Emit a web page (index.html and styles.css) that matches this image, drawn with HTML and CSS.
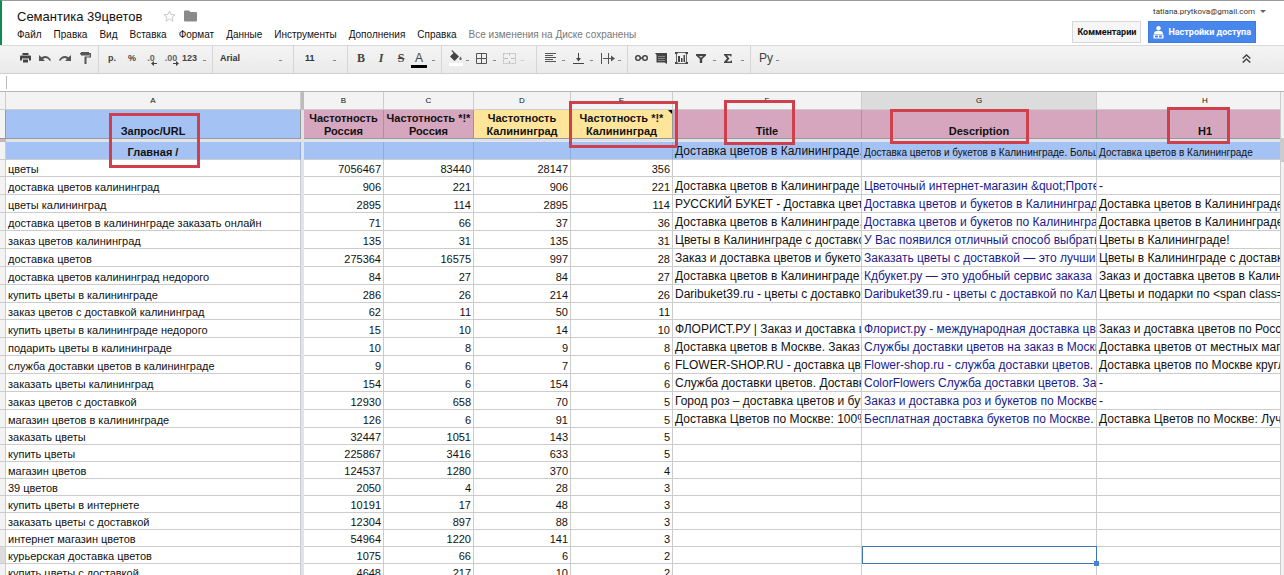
FILE: index.html
```html
<!DOCTYPE html>
<html lang="ru">
<head>
<meta charset="utf-8">
<title>Семантика 39цветов</title>
<link rel="stylesheet" href="styles.css">
</head>
<body>
<header class="top">
  <div class="doc">
    <div class="title-row">
      <h1 class="title">Семантика 39цветов</h1>
      <button class="icon-btn" aria-label="Пометить"><svg width="13" height="12" viewBox="0 0 13 12" fill="none" stroke="#c8c8c8"><path d="M6.5 1 8 4.5l4 .3-3 2.5 1 3.9-3.500-2.200L3 11.200l1-3.900-3-2.500 4-.3z"/></svg></button>
      <button class="icon-btn" aria-label="Переместить"><svg width="13" height="12" viewBox="0 0 13 12" fill="#8a8a8a"><path d="M0 1.500Q0 .5 1 .5H5L6.500 2H12Q13 2 13 3V10.500Q13 11.500 12 11.500H1Q0 11.500 0 10.500z"/></svg></button>
    </div>
    <nav class="menu">
      <button>Файл</button><button>Правка</button><button>Вид</button><button>Вставка</button><button>Формат</button><button>Данные</button><button>Инструменты</button><button>Дополнения</button><button>Справка</button>
      <span class="saved">Все изменения на Диске сохранены</span>
    </nav>
  </div>
  <div class="account">
    <button class="mail">tatiana.prytkova@gmail.com<span class="tri"></span></button>
    <div class="actions">
      <button class="comments">Комментарии</button>
      <button class="share"><svg width="11" height="13" viewBox="0 0 11 13" fill="#fff"><circle cx="5.500" cy="2.200" r="2.200"/><path d="M1 8Q1 5 4 5H7Q10 5 10 8z"/><path d="M.5 8.500H10.500V12.500H.5z"/><path fill="#4787ed" d="M2 9.500H5V11.500H2zM6 9.500H9V11.500H6z"/></svg>Настройки доступа</button>
    </div>
  </div>
</header>
<div class="toolbar" role="toolbar">
  <div class="group">
    <button aria-label="Печать"><svg width="11" height="10" viewBox="0 0 11 10" fill="#444"><path d="M2.500 0H8.500V2H2.500zM1 2.500H10Q11 2.500 11 3.500V7.500H9V5.500H2V7.500H0V3.500Q0 2.500 1 2.500zM3 6.500H8V9.500H3z"/></svg></button>
    <button aria-label="Отменить"><svg width="12" height="8" viewBox="0 0 12 8"><path d="M0 1V7H6L4 5Q7.500 2.500 11 7L12 6Q8-.5 2.500 3.300z" fill="#555"/></svg></button>
    <button aria-label="Повторить"><svg width="12" height="8" viewBox="0 0 12 8"><path d="M12 1V7H6L8 5Q4.500 2.500 1 7L0 6Q4-.5 9.500 3.300z" fill="#555"/></svg></button>
    <button aria-label="Копировать форматирование"><svg width="11" height="12" viewBox="0 0 11 12"><path d="M1 0H9V1H11V5.500H6.500V12H4.500V4.500H9.500V2.500H9V3.500H1V2.500H0V1H1z" fill="#555"/></svg></button>
  </div>
  <div class="group">
    <button>р.</button><button>%</button>
    <button class="dec">.0<svg width="6" height="5" viewBox="0 0 6 5"><path d="M0 2.500 3 0V2H6V3H3V5z" fill="#444"/></svg></button>
    <button class="dec">.00<svg width="6" height="5" viewBox="0 0 6 5"><path d="M6 2.500 3 0V2H0V3H3V5z" fill="#444"/></svg></button>
    <button class="drop num-format">123</button>
  </div>
  <div class="group"><label class="pick font"><select aria-label="Шрифт"><option>Arial</option></select></label></div>
  <div class="group"><label class="pick size"><select aria-label="Размер шрифта"><option>11</option></select></label></div>
  <div class="group">
    <button class="serif">B</button><button class="serif italic">I</button><button class="serif strike">S</button><button class="drop tcolor"><span>A</span></button>
  </div>
  <div class="group">
    <button class="drop" aria-label="Цвет заливки"><svg width="14" height="16" viewBox="0 0 14 16"><path d="M3 0 10 6.500 5.500 11 1 6.500 4.500 3 2.500 1z" fill="#444"/><path d="M11.500 6.500Q14 10 11.500 10T11.500 6.500" fill="#666"/><path d="M0 13H14V16H0z" fill="#fff"/></svg></button>
    <button class="drop" aria-label="Границы"><svg width="11" height="11" viewBox="0 0 11 11" fill="none" stroke="#555"><path d="M.5.5H10.500V10.500H.5zM5.500.5V10.500M.5 5.500H10.500"/></svg></button>
    <button class="drop faint" aria-label="Объединить ячейки"><svg width="13" height="11" viewBox="0 0 13 11" fill="none" stroke="#bbb"><path stroke-dasharray="2 1" d="M.5.5H12.500V10.500H.5zM6.500.5V3M6.500 8V10.500"/><path d="M1 5.500H5M8 5.500H12"/></svg></button>
  </div>
  <div class="group loose">
    <button class="drop" aria-label="Выравнивание"><svg width="11" height="10" viewBox="0 0 11 10" stroke="#555"><path d="M0 .5H11M0 2.500H8M0 4.500H11M0 6.500H8M0 8.500H11"/></svg></button>
    <button class="drop" aria-label="По вертикали"><svg width="11" height="11" viewBox="0 0 11 11" fill="#444"><path d="M5 0H6V5H8L5.500 8.500 3 5H5zM0 10H11V11H0z"/></svg></button>
    <button class="drop" aria-label="Перенос текста"><svg width="14" height="11" viewBox="0 0 14 11" fill="#555"><path d="M0 0H1V11H0zM2 5H10V2.500L14 5.500 10 8.500V6H2zM7 0H8V11H7z"/></svg></button>
  </div>
  <div class="group loose">
    <button aria-label="Ссылка"><svg width="13" height="6" viewBox="0 0 13 6" fill="none" stroke="#444" stroke-width="1.500"><rect x=".8" y=".8" width="4.400" height="4.400" rx="2"/><rect x="7.800" y=".8" width="4.400" height="4.400" rx="2"/><path d="M5 3H8"/></svg></button>
    <button aria-label="Комментарий"><svg width="12" height="11" viewBox="0 0 12 11"><path d="M0 0H12V11L9.500 9.500H1.500V2z" fill="#444"/><path d="M3 3.500H10M3 5.500H10M3 7.500H10" stroke="#888"/></svg></button>
    <button aria-label="Диаграмма"><svg width="13" height="12" viewBox="0 0 13 12"><path d="M1.500.5H11.500V11.500H1.500z" fill="none" stroke="#666"/><path d="M0 0H2.500V2H0zM10.500 0H13V2H10.500zM0 10H2.500V12H0zM10.500 10H13V12H10.500zM3 4H5V10H3zM6 6H7.500V10H6zM8.500 3H10V10H8.500z" fill="#444"/></svg></button>
    <button class="drop" aria-label="Фильтр"><svg width="10" height="9" viewBox="0 0 10 9"><path d="M0 0H10V1.500L6.200 5V9H3.800V5L0 1.500z" fill="#444"/><path d="M3 2H7L5 4z" fill="#ccc"/></svg></button>
    <button class="drop" aria-label="Функции"><svg width="8" height="9" viewBox="0 0 8 9"><path d="M0 0H7.500V2.500H6.500L6 1.500H3L5.500 4.500 3 7.500H6.500L7 6.500H8V9H0V8L3 4.500 0 1z" fill="#444"/></svg></button>
  </div>
  <div class="group loose last"><button class="drop input-tools">Ру</button></div>
  <button class="collapse" aria-label="Скрыть меню"><svg width="9" height="9" viewBox="0 0 9 9" fill="none" stroke="#444" stroke-width="1.500"><path d="M.7 4.500 4.500 1 8.300 4.500M.7 8.500 4.500 5 8.300 8.500"/></svg></button>
</div>
<div class="formula"><input aria-label="Формула" type="text"></div>
<main class="sheet">
<div class="viewport">
<table class="grid">
<colgroup><col class="c-n"><col class="c-a"><col class="c-f"><col class="c-b"><col class="c-c"><col class="c-d"><col class="c-e"><col class="c-t"><col class="c-g"><col class="c-h"></colgroup>
<thead>
<tr class="letters"><th></th><th>A</th><th class="bar"></th><th>B</th><th>C</th><th>D</th><th>E</th><th>F</th><th class="on">G</th><th>H</th></tr>
<tr class="names"><th class="num"></th><th class="blue">Запрос/URL<i class="mark m-url"></i></th><td class="freeze" rowspan="2"></td><th class="pink">Частотность<br>Россия</th><th class="pink">Частотность *!*<br>Россия</th><th class="yellow">Частотность<br>Калининград</th><th class="yellow">Частотность *!*<br>Калининград<i class="note"></i><i class="mark m-freq"></i></th><th class="pink">Title<i class="mark m-title"></i></th><th class="pink">Description<i class="mark m-desc"></i></th><th class="pink">H1<i class="mark m-h1"></i></th></tr>
<tr class="split"><td class="grip"></td><td></td><td colspan="7"></td></tr>
</thead>
<tbody>
<tr class="main tall"><td class="num"></td><th>Главная /</th><td class="freeze" rowspan="25"></td><td></td><td></td><td></td><td></td><td class="t">Доставка цветов в Калининграде.</td><td class="s">Доставка цветов и букетов в Калининграде. Большой</td><td class="s">Доставка цветов в Калининграде</td></tr>
<tr><td class="num"></td><td>цветы</td><td>7056467</td><td>83440</td><td>28147</td><td>356</td><td></td><td></td><td></td></tr>
<tr class="tall"><td class="num"></td><td>доставка цветов калининград</td><td>906</td><td>221</td><td>906</td><td>221</td><td class="t">Доставка цветов в Калининграде и</td><td class="t g">Цветочный интернет-магазин &amp;quot;Протея</td><td class="t">-</td></tr>
<tr class="tall"><td class="num"></td><td>цветы калининград</td><td>2895</td><td>114</td><td>2895</td><td>114</td><td class="t">РУССКИЙ БУКЕТ - Доставка цветов</td><td class="t g">Доставка цветов и букетов в Калининграде</td><td class="t">Доставка цветов в Калининграде</td></tr>
<tr class="tall"><td class="num"></td><td>доставка цветов в калининграде заказать онлайн</td><td>71</td><td>66</td><td>37</td><td>36</td><td class="t">Доставка цветов в Калининграде,</td><td class="t g">Доставка цветов и букетов по Калининграду</td><td class="t">Доставка цветов в Калининграде</td></tr>
<tr class="tall"><td class="num"></td><td>заказ цветов калининград</td><td>135</td><td>31</td><td>135</td><td>31</td><td class="t">Цветы в Калининграде с доставкой</td><td class="t g">У Вас появился отличный способ выбрать</td><td class="t">Цветы в Калининграде!</td></tr>
<tr class="tall"><td class="num"></td><td>доставка цветов</td><td>275364</td><td>16575</td><td>997</td><td>28</td><td class="t">Заказ и доставка цветов и букетов</td><td class="t g">Заказать цветы с доставкой — это лучший</td><td class="t">Цветы в Калининграде с доставкой</td></tr>
<tr class="tall"><td class="num"></td><td>доставка цветов калининград недорого</td><td>84</td><td>27</td><td>84</td><td>27</td><td class="t">Доставка цветов в Калининграде -</td><td class="t g">Кдбукет.ру — это удобный сервис заказа и</td><td class="t">Заказ и доставка цветов в Калининграде</td></tr>
<tr class="tall"><td class="num"></td><td>купить цветы в калининграде</td><td>286</td><td>26</td><td>214</td><td>26</td><td class="t">Daribuket39.ru - цветы с доставкой</td><td class="t g">Daribuket39.ru - цветы с доставкой по Калининграду</td><td class="t">Цветы и подарки по &lt;span class="</td></tr>
<tr><td class="num"></td><td>заказ цветов с доставкой калининград</td><td>62</td><td>11</td><td>50</td><td>11</td><td></td><td></td><td></td></tr>
<tr class="tall"><td class="num"></td><td>купить цветы в калининграде недорого</td><td>15</td><td>10</td><td>14</td><td>10</td><td class="t">ФЛОРИСТ.РУ | Заказ и доставка цветов</td><td class="t g">Флорист.ру - международная доставка цветов</td><td class="t">Заказ и доставка цветов по России</td></tr>
<tr class="tall"><td class="num"></td><td>подарить цветы в калининграде</td><td>10</td><td>8</td><td>9</td><td>8</td><td class="t">Доставка цветов в Москве. Заказ 6</td><td class="t g">Службы доставки цветов на заказ в Москве</td><td class="t">Доставка цветов от местных магазинов</td></tr>
<tr class="tall"><td class="num"></td><td>служба доставки цветов в калининграде</td><td>9</td><td>6</td><td>7</td><td>6</td><td class="t">FLOWER-SHOP.RU - доставка цветов</td><td class="t g">Flower-shop.ru - служба доставки цветов. С</td><td class="t">Доставка цветов по Москве круглосуточно</td></tr>
<tr class="tall"><td class="num"></td><td>заказать цветы калининград</td><td>154</td><td>6</td><td>154</td><td>6</td><td class="t">Служба доставки цветов. Доставка</td><td class="t g">ColorFlowers Служба доставки цветов. Заказ</td><td class="t">-</td></tr>
<tr class="tall"><td class="num"></td><td>заказ цветов с доставкой</td><td>12930</td><td>658</td><td>70</td><td>5</td><td class="t">Город роз – доставка цветов и букетов</td><td class="t g">Заказ и доставка роз и букетов по Москве</td><td class="t">-</td></tr>
<tr class="tall"><td class="num"></td><td>магазин цветов в калининграде</td><td>126</td><td>6</td><td>91</td><td>5</td><td class="t">Доставка Цветов по Москве: 100%</td><td class="t g">Бесплатная доставка букетов по Москве. Т</td><td class="t">Доставка Цветов по Москве: Лучшие</td></tr>
<tr><td class="num"></td><td>заказать цветы</td><td>32447</td><td>1051</td><td>143</td><td>5</td><td></td><td></td><td></td></tr>
<tr><td class="num"></td><td>купить цветы</td><td>225867</td><td>3416</td><td>633</td><td>5</td><td></td><td></td><td></td></tr>
<tr><td class="num"></td><td>магазин цветов</td><td>124537</td><td>1280</td><td>370</td><td>4</td><td></td><td></td><td></td></tr>
<tr><td class="num"></td><td>39 цветов</td><td>2050</td><td>4</td><td>28</td><td>3</td><td></td><td></td><td></td></tr>
<tr><td class="num"></td><td>купить цветы в интернете</td><td>10191</td><td>17</td><td>48</td><td>3</td><td></td><td></td><td></td></tr>
<tr><td class="num"></td><td>заказать цветы с доставкой</td><td>12304</td><td>897</td><td>88</td><td>3</td><td></td><td></td><td></td></tr>
<tr><td class="num"></td><td>интернет магазин цветов</td><td>54964</td><td>1220</td><td>141</td><td>3</td><td></td><td></td><td></td></tr>
<tr><td class="num on"></td><td>курьерская доставка цветов</td><td>1075</td><td>66</td><td>6</td><td>2</td><td></td><td class="cursor"><i class="ring"></i></td><td></td></tr>
<tr><td class="num"></td><td>купить цветы с доставкой</td><td>4648</td><td>217</td><td>10</td><td>2</td><td></td><td></td><td></td></tr>
</tbody>
</table>
</div>
<div class="scroll"><div class="thumb"></div></div>
</main>
</body>
</html>
```
FILE: styles.css
```css
* { box-sizing: border-box; }
body {
  margin: 0;
  height: 100vh;
  overflow: hidden;
  display: flex;
  flex-direction: column;
  background: #fff;
  color: #111;
  font-family: "Liberation Sans", Arial, sans-serif;
  font-size: 12px;
}
button, select, input {
  margin: 0;
  padding: 0;
  border: 0;
  background: none;
  color: inherit;
  font: inherit;
}
svg { display: block; flex: none; }

.top {
  display: flex;
  justify-content: space-between;
  height: 45px;
  flex: none;
  border-top: 1px solid #999;
  border-left: 2px solid #0f8a54;
}
.doc { padding: 6px 0 0 15px; }
.title-row { display: flex; align-items: center; height: 18px; }
.title { margin: 0 21px 0 0; font-size: 13px; font-weight: 400; }
.icon-btn { margin-right: 8px; }
.menu { display: flex; gap: 12px; font-size: 10px; line-height: 14px; padding-top: 3px; white-space: nowrap; }
.saved { color: #777; }
.account { display: flex; flex-direction: column; align-items: flex-end; padding: 5px 18px 0 0; }
.mail { display: flex; align-items: center; gap: 5px; font-family: Roboto, sans-serif; font-size: 8px; line-height: 11px; color: #333; }
.tri { border: 3px solid transparent; border-top-color: #666; border-bottom: 0; }
.actions { display: flex; gap: 7px; padding: 4px 10px 0 0; }
.comments, .share {
  height: 22px;
  padding: 0 4px;
  border: 1px solid #d6d6d6;
  background: #f6f6f6;
  font-family: Roboto, sans-serif;
  font-size: 9px;
  font-weight: 700;
}
.share { display: flex; align-items: center; gap: 4px; color: #fff; background: #4787ed; border-color: #3d7be0; }

.toolbar {
  display: flex;
  flex: none;
  height: 29px;
  padding-left: 12px;
  background: linear-gradient(#f4f4f4, #eaeaea);
  border-top: 1px solid #d9d9d9;
  border-bottom: 1px solid #cfcfcf;
  color: #444;
  font-size: 9px;
  font-weight: 700;
}
.group { display: flex; align-items: center; padding: 0 3px 3px; border-right: 1px solid #d5d5d5; }
.group.last { border: 0; }
.group button { width: 20px; height: 24px; display: flex; align-items: center; justify-content: center; }
.group .drop { width: 27px; justify-content: space-between; padding: 0 3px 0 4px; }
.group.loose .drop { width: 28px; padding-left: 5px; }
.group .num-format { padding: 0 3px 0 0; }
.group .faint { width: 34px; padding-right: 9px; }
.drop::after, .pick::after { content: ""; width: 3px; height: 1px; margin-top: 4px; background: #888; }
.group .faint::after { background: #ccc; }
.group .dec { color: #666; }
.dec svg { margin: 10px 0 0 -4px; }
.pick { display: flex; align-items: center; padding-right: 8px; color: #333; }
.pick select { appearance: none; flex: 1; min-width: 0; }
.font { width: 74px; padding-left: 4px; }
.size { width: 47px; padding-left: 8px; }
.serif { font-family: "Liberation Serif", serif; font-size: 12px; }
.italic { font-style: italic; }
.strike { text-decoration: line-through; }
.tcolor span { font-size: 12px; line-height: 13px; font-weight: 400; padding: 0 4px; margin: 4px 0 0 -4px; border-bottom: 3px solid #000; }
.group .input-tools { font-size: 12px; font-weight: 400; width: 32px; }
.collapse { margin-left: auto; padding: 0 33px 3px 0; }

.formula { flex: none; height: 17px; padding-left: 6px; }
.formula input { width: 100%; height: 13px; border-left: 1px solid #bbb; padding-left: 4px; display: block; margin-top: 2px; }

.sheet { flex: 1; min-height: 0; overflow: hidden; display: flex; align-items: stretch; border-top: 1px solid #b5b5b5; }
.viewport { flex: 1; min-width: 0; overflow: hidden; }
.grid { width: 1314px; min-width: 100%; table-layout: fixed; border-collapse: separate; border-spacing: 0; }
.c-n { width: 6px; }
.c-a { width: 295px; }
.c-f { width: 3px; }
.c-b { width: 80px; }
.c-c { width: 90px; }
.c-d { width: 97px; }
.c-e { width: 102px; }
.c-t { width: 189px; }
.c-g { width: 235px; }
.c-h { width: 217px; }
.grid th, .grid td {
  height: 17px;
  padding: 0 2px;
  border: 0 solid #ccc;
  border-width: 0 1px 1px 0;
  font-size: 11px;
  line-height: 14px;
  vertical-align: bottom;
  white-space: nowrap;
  overflow: hidden;
  text-align: right;
}
.grid td:nth-child(2) { text-align: left; }
.grid .tall td, .grid .tall th { height: 18px; }
.grid .t { font-size: 12px; line-height: 16px; text-align: left; }
.grid .s { font-size: 10px; line-height: 13px; text-align: left; }
.grid .g { color: #1a1a8c; }
.grid .letters th { height: 18px; background: #f3f3f3; font-size: 8px; font-weight: 400; text-align: center; vertical-align: middle; }
.grid .letters .bar { background: #bcbcbc; padding: 0; border: 0; }
.grid .letters .on { background: #dcdcdc; }
.grid .names th { height: 29px; line-height: 13px; text-align: center; position: relative; overflow: visible; border-color: #999; }
.grid .num { padding: 0; background: #f3f3f3; }
.grid .num.on { background: #dcdcdc; }
.grid .blue, .grid .main td, .grid .main th { background: #a4c2f4; border-right-color: #8fabd8; text-align: center; }
.grid .main .num { background: #f3f3f3; border-right-color: #ccc; }
.grid .main .t, .grid .main .s { text-align: left; }
.grid .pink { background: #d5a6bd; }
.grid .yellow { background: #ffe599; }
.grid .freeze, .grid .main .freeze { padding: 0; border: 0; background: #dfe3ea; }
.grid .split td { height: 3px; padding: 0; border: 0; background: #dfe3ea; line-height: 0; }
.grid .split .grip { background: #c9b5bd; }
.note { position: absolute; top: 0; right: 0; border: 2px solid #000; border-bottom-color: transparent; border-left-color: transparent; }
.mark { position: absolute; z-index: 1; border: 3px solid #d0404c; }
.m-url { left: 103px; top: 3px; width: 91px; height: 55px; }
.m-freq { left: -2px; top: -9px; width: 109px; height: 47px; }
.m-title { left: 51px; top: -10px; width: 71px; height: 45px; }
.m-desc { left: 28px; top: -1px; width: 139px; height: 35px; }
.m-h1 { left: 70px; top: -3px; width: 63px; height: 37px; }
.grid .cursor { position: relative; overflow: visible; }
.ring { position: absolute; inset: -1px -1px -1px 0; border: 1px solid #3f77b5; }
.ring::after { content: ""; position: absolute; right: -3px; bottom: -3px; width: 5px; height: 5px; background: #4a84cc; }
.scroll { width: 4px; flex: none; background: #f1f1f1; border-left: 1px solid #ccc; padding-top: 46px; }
.thumb { height: 24px; background: #ccc; }
```
